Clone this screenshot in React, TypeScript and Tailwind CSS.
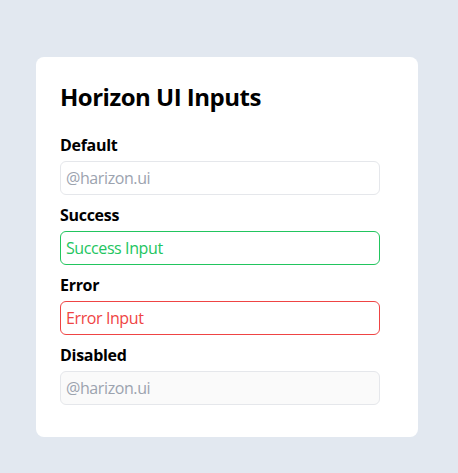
import React from 'react'

type Field = {
  label: string
  value?: string
  placeholder?: string
  variant: 'default' | 'success' | 'error' | 'disabled'
}

const fields: Field[] = [
  { label: 'Default', placeholder: '@harizon.ui', variant: 'default' },
  { label: 'Success', value: 'Success Input', variant: 'success' },
  { label: 'Error', value: 'Error Input', variant: 'error' },
  { label: 'Disabled', placeholder: '@harizon.ui', variant: 'disabled' }
]

const variantClass: Record<Field['variant'], string> = {
  default: 'border-[#e5e7eb] bg-white text-gray-700 placeholder:text-[#9ca3af]',
  success: 'border-[#22c55e] bg-white text-[#22c55e]',
  error: 'border-[#ef4444] bg-white text-[#ef4444]',
  disabled: 'border-[#e5e7eb] bg-[#fafafa] placeholder:text-[#9ca3af]'
}

export default function App() {
  return (
    <div className="min-h-[473px] bg-[#e2e8f0] pl-[36px] pt-[57px] font-['Open_Sans',sans-serif]">
      <div className="w-[382px] rounded-lg bg-white px-6 pt-6 pb-8">
        <h1 className="mb-6 text-2xl leading-8 font-bold tracking-[-0.5px] text-black">Horizon UI Inputs</h1>
        <div className="flex flex-col gap-3">
          {fields.map((f) => (
            <div key={f.label}>
              <label className="mb-2 block text-base leading-4 font-bold tracking-[-0.3px] text-black">{f.label}</label>
              <input
                className={`block h-[34px] w-80 rounded-md border px-[5px] text-base tracking-[-0.4px] outline-none ${variantClass[f.variant]}`}
                defaultValue={f.value}
                placeholder={f.placeholder}
                disabled={f.variant === 'disabled'}
              />
            </div>
          ))}
        </div>
      </div>
    </div>
  )
}
